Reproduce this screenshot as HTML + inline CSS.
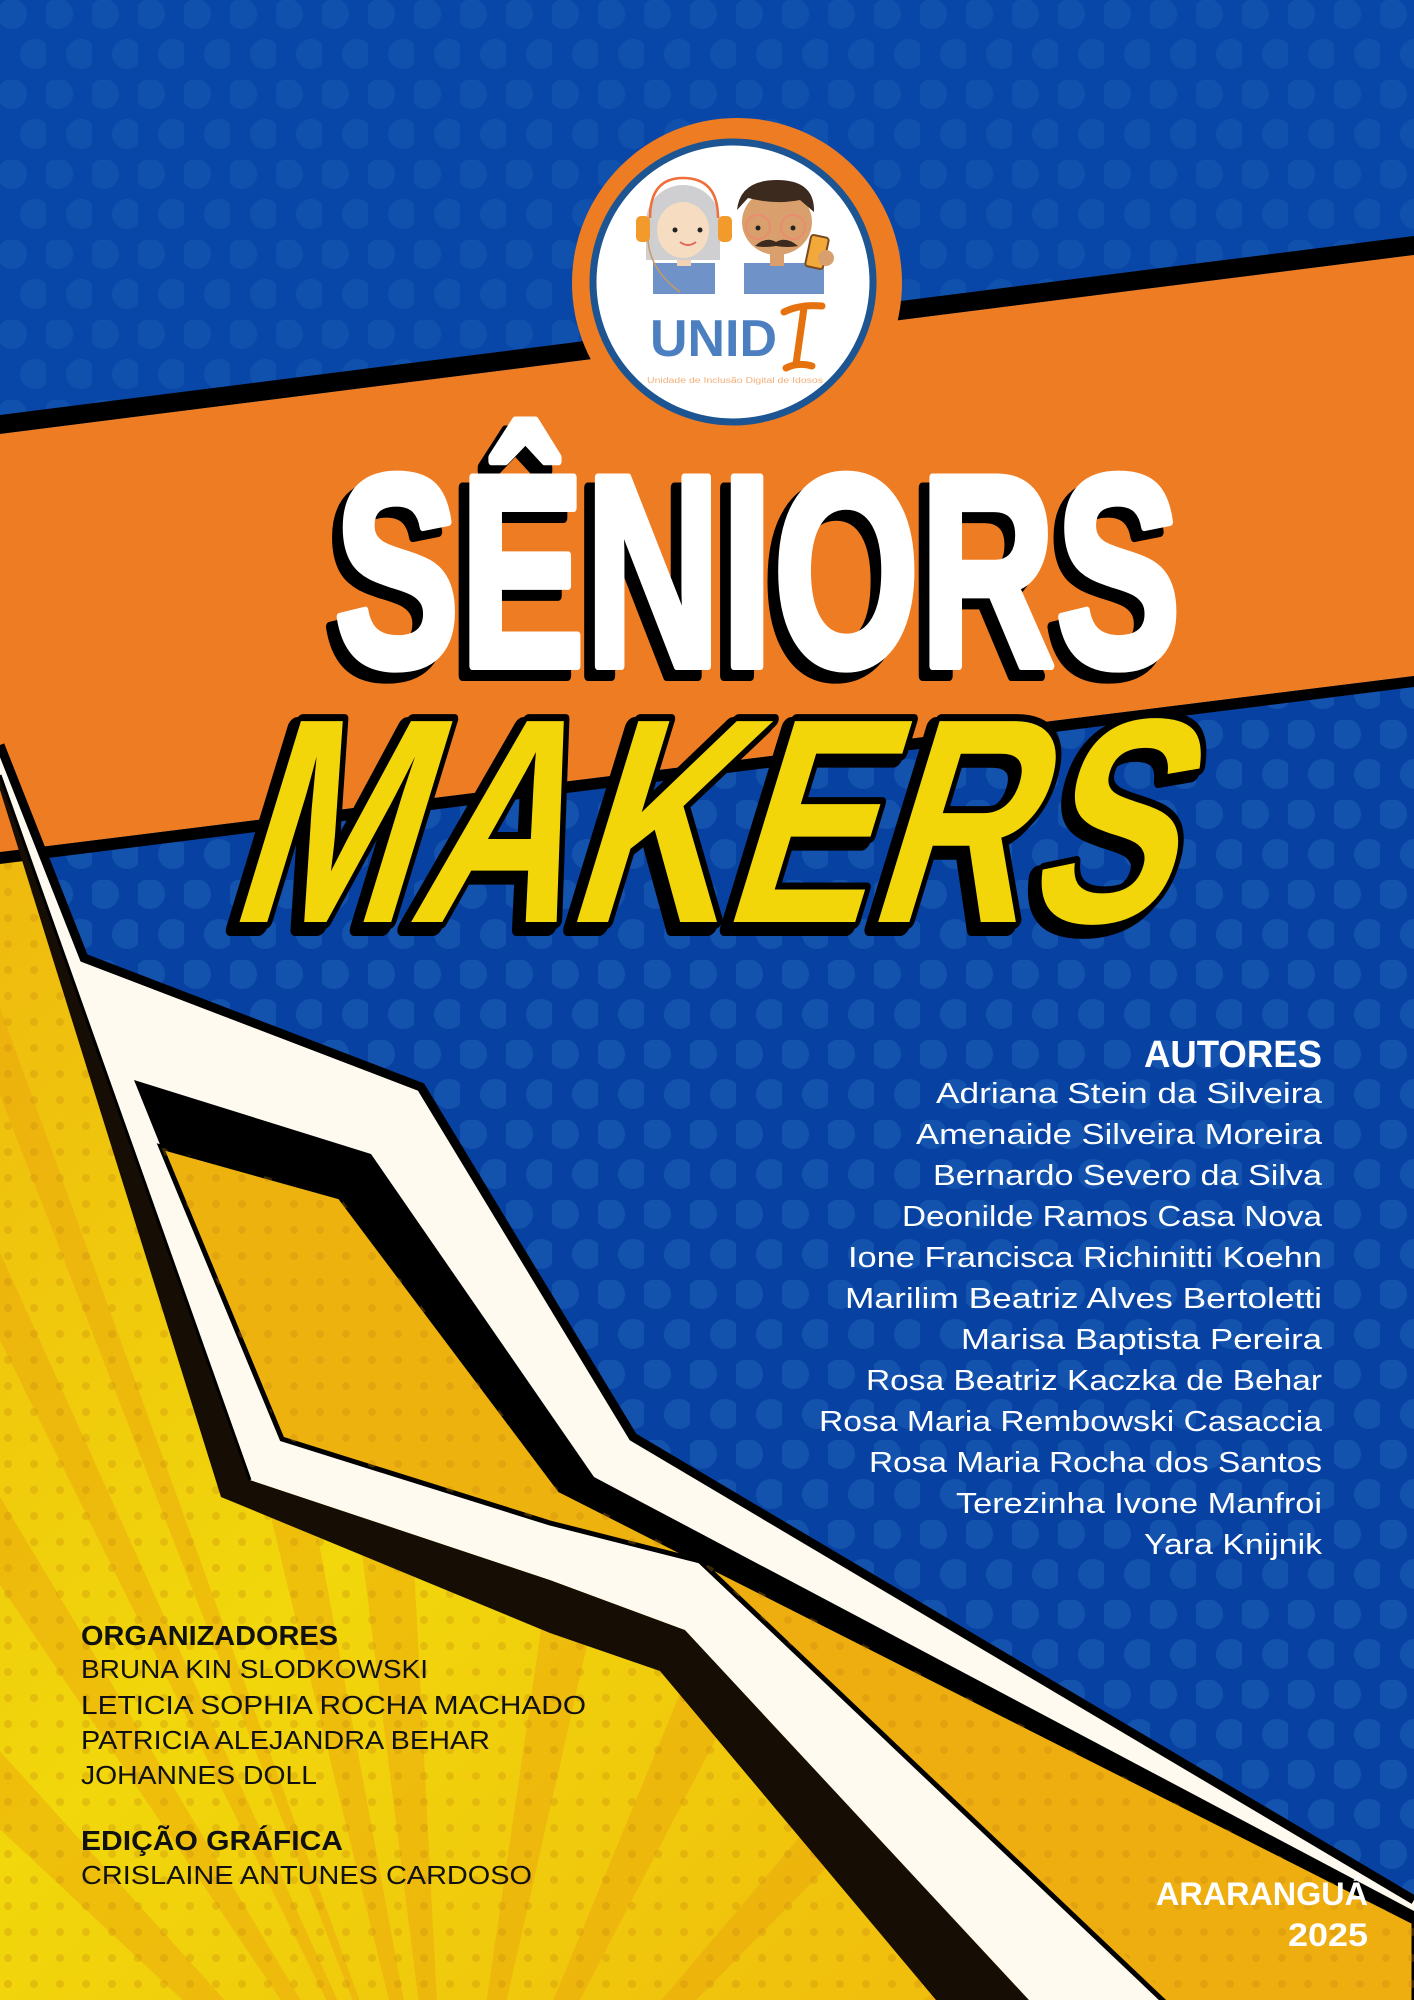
<!DOCTYPE html>
<html><head><meta charset="utf-8"><style>
html,body{margin:0;padding:0;width:1414px;height:2000px;overflow:hidden;background:#0742a3;position:relative}
svg{display:block;position:absolute;left:0;top:0;overflow:hidden}
.nm{font-family:"Liberation Sans",sans-serif;font-size:29px;fill:#fff}
.org{font-family:"Liberation Sans",sans-serif;font-size:26px;fill:#111}
.hd{font-family:"Liberation Sans Narrow","Liberation Sans",sans-serif;font-weight:bold}
</style></head><body>
<svg width="1414" height="2000" viewBox="0 0 1414 2000" xmlns="http://www.w3.org/2000/svg">
<defs>
<linearGradient id="yel" x1="0" y1="0" x2="1" y2="1">
<stop offset="0" stop-color="#eeb50f"/><stop offset="0.45" stop-color="#f1d70b"/><stop offset="1" stop-color="#efb20e"/>
</linearGradient>
<pattern id="bdots" width="46" height="80" patternUnits="userSpaceOnUse">
<circle cx="12" cy="14" r="15" fill="#1a5db4" opacity="0.6"/>
<circle cx="35" cy="54" r="15" fill="#1a5db4" opacity="0.6"/>
</pattern>
<pattern id="ydots" width="26" height="26" patternUnits="userSpaceOnUse">
<circle cx="8" cy="8" r="4" fill="#c98a0c" opacity="0.3"/>
</pattern>
</defs>

<rect x="0" y="700" width="1414" height="1300" fill="url(#yel)"/>
<g fill="#eba40d" opacity="0.45">
<polygon points="450,2250 -10,980 -10,1070"/>
<polygon points="450,2250 -10,1230 -10,1320"/>
<polygon points="450,2250 -10,1480 -10,1570"/>
<polygon points="450,2250 -10,1740 -10,1820"/>
<polygon points="450,2250 120,900 200,900"/>
<polygon points="450,2250 330,1300 400,1300"/>
<polygon points="450,2250 560,1500 620,1500"/>
<polygon points="450,2250 760,1500 840,1500"/>
<polygon points="450,2250 1000,1600 1090,1600"/>
<polygon points="450,2250 1300,1800 1414,1820"/>
</g>
<rect x="0" y="700" width="1414" height="1300" fill="url(#ydots)"/>

<polygon points="0,0 1414,0 1414,1900 633,1437 421,1087 84,958 0,745" fill="#0742a3"/>
<polygon points="0,0 1414,0 1414,1900 633,1437 421,1087 84,958 0,745" fill="url(#bdots)"/>
<rect x="0" y="0" width="1414" height="420" fill="#0b4fae" opacity="0.35"/>

<polygon points="0,415 1414,236 1414,255 0,434" fill="#000"/>
<polygon points="0,434 1414,255 1414,676 0,852" fill="#ee7c23"/>
<polygon points="0,852 1414,676 1414,687 0,864" fill="#000"/>

<polygon points="0,790 221,1497 550,1633 660,1671 936,2000 1029,2000 685,1630 550,1580 250,1480 0,775" fill="#160e04"/>
<polygon points="0,745 84,958 421,1087 633,1437 1414,1900 1414,2000 1029,2000 685,1630 550,1580 250,1480 0,775" fill="#fffaf0"/>
<!-- inner orange: left lobe -->
<polygon points="161,1147 340,1197 560,1490 700,1561 550,1523 282,1439" fill="#eeb20f" stroke="#000" stroke-width="5"/>
<!-- inner orange: right lobe -->
<polygon points="700,1561 1414,1922 1414,2010 1173,2010" fill="#eeae10" stroke="#000" stroke-width="5"/>
<polygon points="161,1147 340,1197 560,1490 700,1561 550,1523 282,1439" fill="url(#ydots)"/>
<polygon points="700,1561 1414,1922 1414,2000 1173,2000" fill="url(#ydots)"/>
<polygon points="134,1080 371,1154 594,1477 1414,1911 1414,1924 560,1490 340,1197 161,1147" fill="#000"/>
<polyline points="0,745 84,958 421,1087 633,1437 1414,1900" fill="none" stroke="#000" stroke-width="9"/>
<line x1="0" y1="775" x2="250" y2="1480" stroke="#000" stroke-width="3"/>

<circle cx="737" cy="283" r="165" fill="#ee7c23"/>
<circle cx="733" cy="282" r="140" fill="#fff" stroke="#1d5492" stroke-width="7"/>
<rect x="653" y="263" width="62" height="31" fill="#6f93c9"/>
<rect x="677" y="250" width="14" height="16" fill="#f3d3b3"/>
<circle cx="683" cy="222" r="37" fill="#cfcfd1"/>
<rect x="646" y="222" width="74" height="38" fill="#cfcfd1"/>
<ellipse cx="683" cy="230" rx="26" ry="28" fill="#f6dcc0"/>
<circle cx="675" cy="230" r="2.5" fill="#222"/><circle cx="700" cy="230" r="2.5" fill="#222"/>
<path d="M680 242 Q688 248 696 242" stroke="#e06a5a" stroke-width="2" fill="none"/>
<path d="M650 218 Q650 178 683 178 Q718 178 718 218" stroke="#ef6e3a" stroke-width="2.5" fill="none"/>
<rect x="636" y="216" width="14" height="26" rx="5" fill="#f39a2c"/>
<rect x="718" y="216" width="14" height="26" rx="5" fill="#f39a2c"/>
<path d="M648 240 Q650 270 680 292" stroke="#c79a60" stroke-width="1.5" fill="none"/>
<rect x="744" y="263" width="80" height="31" fill="#6f93c9"/>
<rect x="770" y="248" width="14" height="18" fill="#d9a06e"/>
<ellipse cx="777" cy="222" rx="35" ry="33" fill="#d9a06e"/>
<path d="M737 210 Q740 180 777 180 Q815 180 814 212 L800 200 Q775 205 748 198 Z" fill="#3d2a1e"/>
<circle cx="758" cy="227" r="12" fill="none" stroke="#e98d6e" stroke-width="2"/>
<circle cx="793" cy="227" r="12" fill="none" stroke="#e98d6e" stroke-width="2"/>
<circle cx="758" cy="228" r="2.5" fill="#222"/><circle cx="793" cy="228" r="2.5" fill="#222"/>
<path d="M755 246 Q766 236 776 242 Q786 236 798 246 Q788 248 776 246 Q764 248 755 246 Z" fill="#3d2a1e"/>
<rect x="808" y="236" width="18" height="32" rx="3" fill="#f3a93a" stroke="#7a4a20" stroke-width="2" transform="rotate(12 817 252)"/>
<circle cx="826" cy="258" r="8" fill="#d9a06e"/>
<text x="650" y="356" font-family="Liberation Sans, sans-serif" font-weight="bold" font-size="52" fill="#4b7fc0" textLength="127" lengthAdjust="spacingAndGlyphs">UNID</text>
<path d="M784 312 Q800 304 822 306 M804 308 L796 364 M786 368 Q798 362 812 366" stroke="#e5720f" stroke-width="7" fill="none" stroke-linecap="round"/>
<text x="647" y="383" font-family="Liberation Sans, sans-serif" font-size="8" fill="#f3b07a" textLength="176" lengthAdjust="spacingAndGlyphs">Unidade de Inclusão Digital de Idosos</text>

<g font-family="Liberation Sans, sans-serif" font-weight="bold" font-size="274">
<text x="324" y="676" textLength="847" lengthAdjust="spacingAndGlyphs" fill="#000" stroke="#000" stroke-width="10" stroke-linejoin="round">SÊNIORS</text>
<text x="334" y="666" textLength="847" lengthAdjust="spacingAndGlyphs" fill="#fff" stroke="#fff" stroke-width="8" stroke-linejoin="round">SÊNIORS</text>
</g>
<g font-family="Liberation Sans, sans-serif" font-weight="bold" font-size="292" transform="translate(225,922) skewX(-17)">
<text x="-5" y="5" textLength="940" lengthAdjust="spacingAndGlyphs" fill="#000" stroke="#000" stroke-width="18" stroke-linejoin="round">MAKERS</text>
<text x="0" y="0" textLength="940" lengthAdjust="spacingAndGlyphs" fill="#f2d60a" stroke="#000" stroke-width="14" stroke-linejoin="round" paint-order="stroke">MAKERS</text>
</g>

<text class="hd" x="1322" y="1067" text-anchor="end" font-size="38" fill="#fff" textLength="178" lengthAdjust="spacingAndGlyphs">AUTORES</text>
<g class="nm" text-anchor="end">
<text x="1322" y="1103" textLength="386" lengthAdjust="spacingAndGlyphs">Adriana Stein da Silveira</text>
<text x="1322" y="1144" textLength="406" lengthAdjust="spacingAndGlyphs">Amenaide Silveira Moreira</text>
<text x="1322" y="1185" textLength="389" lengthAdjust="spacingAndGlyphs">Bernardo Severo da Silva</text>
<text x="1322" y="1226" textLength="420" lengthAdjust="spacingAndGlyphs">Deonilde Ramos Casa Nova</text>
<text x="1322" y="1267" textLength="474" lengthAdjust="spacingAndGlyphs">Ione Francisca Richinitti Koehn</text>
<text x="1322" y="1308" textLength="477" lengthAdjust="spacingAndGlyphs">Marilim Beatriz Alves Bertoletti</text>
<text x="1322" y="1349" textLength="361" lengthAdjust="spacingAndGlyphs">Marisa Baptista Pereira</text>
<text x="1322" y="1390" textLength="456" lengthAdjust="spacingAndGlyphs">Rosa Beatriz Kaczka de Behar</text>
<text x="1322" y="1431" textLength="503" lengthAdjust="spacingAndGlyphs">Rosa Maria Rembowski Casaccia</text>
<text x="1322" y="1472" textLength="453" lengthAdjust="spacingAndGlyphs">Rosa Maria Rocha dos Santos</text>
<text x="1322" y="1513" textLength="366" lengthAdjust="spacingAndGlyphs">Terezinha Ivone Manfroi</text>
<text x="1322" y="1554" textLength="178" lengthAdjust="spacingAndGlyphs">Yara Knijnik</text>
</g>

<text class="hd" x="81" y="1645" font-size="28" fill="#111" textLength="257" lengthAdjust="spacingAndGlyphs">ORGANIZADORES</text>
<g class="org">
<text x="81" y="1678" textLength="347" lengthAdjust="spacingAndGlyphs">BRUNA KIN SLODKOWSKI</text>
<text x="81" y="1714" textLength="505" lengthAdjust="spacingAndGlyphs">LETICIA SOPHIA ROCHA MACHADO</text>
<text x="81" y="1749" textLength="409" lengthAdjust="spacingAndGlyphs">PATRICIA ALEJANDRA BEHAR</text>
<text x="81" y="1784" textLength="236" lengthAdjust="spacingAndGlyphs">JOHANNES DOLL</text>
</g>
<text class="hd" x="81" y="1850" font-size="28" fill="#111" textLength="262" lengthAdjust="spacingAndGlyphs">EDIÇÃO GRÁFICA</text>
<text class="org" x="81" y="1884" textLength="451" lengthAdjust="spacingAndGlyphs">CRISLAINE ANTUNES CARDOSO</text>

<text class="hd" x="1368" y="1905" text-anchor="end" font-size="32" fill="#fff" textLength="212" lengthAdjust="spacingAndGlyphs">ARARANGUÁ</text>
<text class="hd" x="1368" y="1946" text-anchor="end" font-size="32" fill="#fff" textLength="80" lengthAdjust="spacingAndGlyphs">2025</text>
</svg>
</body></html>
